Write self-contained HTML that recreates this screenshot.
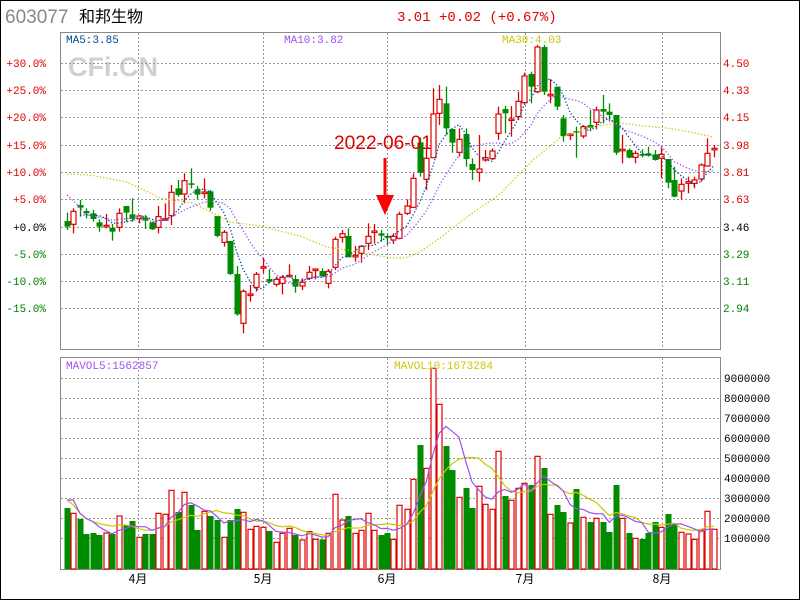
<!DOCTYPE html>
<html><head><meta charset="utf-8">
<style>
html,body{margin:0;padding:0;background:#fff;}
#wrap{position:relative;width:798px;height:598px;border:1px solid #000;overflow:hidden;font-family:"Liberation Sans","Noto Sans CJK SC",sans-serif;}
svg{position:absolute;left:-1px;top:-1px;}
</style></head><body>
<div id="wrap">
<svg id="s" width="800" height="600" xmlns="http://www.w3.org/2000/svg" font-family="Liberation Sans, Noto Sans CJK SC, sans-serif">
<text x="5" y="23" font-size="19" fill="#888">603077</text>
<text x="79" y="22" font-size="16" fill="#000" font-family="Noto Sans CJK SC, sans-serif">和邦生物</text>
<text x="397" y="21" font-size="14" fill="#e00000" font-family="Liberation Mono, monospace">3.01 +0.02 (+0.67%)</text>
<text x="68" y="76" font-size="27" font-weight="bold" fill="#d0d0d0">CFi.CN</text>
<g id="g"></g>
<text x="66" y="43" font-size="11" fill="#004a9a" font-family="Liberation Mono, monospace">MA5:3.85</text>
<text x="284" y="43" font-size="11" fill="#a050f0" font-family="Liberation Mono, monospace">MA10:3.82</text>
<text x="502" y="43" font-size="11" fill="#c8c800" font-family="Liberation Mono, monospace">MA30:4.03</text>
<text x="66" y="369" font-size="11" fill="#a050f0" font-family="Liberation Mono, monospace">MAVOL5:1562857</text>
<text x="394" y="369" font-size="11" fill="#c8c800" font-family="Liberation Mono, monospace">MAVOL10:1673284</text>
<text x="334" y="149" font-size="19" fill="#e00000" textLength="98" lengthAdjust="spacingAndGlyphs">2022-06-01</text>
<rect x="383.5" y="158" width="3" height="42" fill="#f00"/>
<polygon points="376,195 394,195 385,215" fill="#f00"/>
</svg>
</div>
<script>
var g=document.getElementById('g'),h='';
function ln(x1,y1,x2,y2,c,d,w){h+='<line x1="'+x1+'" y1="'+y1+'" x2="'+x2+'" y2="'+y2+'" stroke="'+c+'" stroke-width="'+(w||1)+'"'+(d?' stroke-dasharray="'+d+'"':'')+'/>';}
function tx(x,y,t,c,a,s){h+='<text x="'+x+'" y="'+y+'" font-size="'+(s||11)+'" fill="'+c+'"'+(a?' text-anchor="'+a+'"':'')+' font-family="Liberation Mono, monospace">'+t+'</text>';}
var py=[63,90,117,145,172,199,227,254,281,308];
var lp=['+30.0%','+25.0%','+20.0%','+15.0%','+10.0%','+5.0%','+0.0%','-5.0%','-10.0%','-15.0%'];
var rp=['4.50','4.33','4.15','3.98','3.81','3.63','3.46','3.29','3.11','2.94'];
for(var i=0;i<10;i++){ln(61,py[i]+.5,720,py[i]+.5,'#999','2,2');
 var c=i<6?'#e00000':(i==6?'#000':'#008000');
 tx(46,py[i]+4,lp[i],c,'end');tx(723,py[i]+4,rp[i],c);}
var vx=[138,263,387,525,662];
vx.forEach(function(x){ln(x+.5,33,x+.5,349,'#999','2,2');ln(x+.5,358,x+.5,569,'#999','2,2');});
var mn=['4月','5月','6月','7月','8月'];
for(i=0;i<5;i++)h+='<text x="'+vx[i]+'" y="583" font-size="12" text-anchor="middle" fill="#000" font-family="Noto Sans CJK SC, sans-serif">'+mn[i]+'</text>';
for(i=0;i<9;i++){var y=378+20*i;ln(61,y+.5,720,y+.5,'#999','2,2');tx(724,y+4,(9-i)+'000000','#000');}
h+='<rect x="60.5" y="32.5" width="660" height="317" fill="none" stroke="#888"/>';
h+='<rect x="60.5" y="357.5" width="660" height="212" fill="none" stroke="#888"/>';
var A=[[21,213,230,188,240,0],[40,184,223,175,250,1],[60,165,173,150,200,0],[79,183,190,175,205,0],[98,190,207,180,215,0],[118,217,230,208,245,0],[138,226,229,192,235,1],[157,234,245,222,272,0],[177,190,232,175,245,1],[197,168,188,168,215,0],[216,193,207,145,215,0],[236,198,206,195,220,1],[256,203,212,195,237,0],[276,217,238,215,240,0],[295,200,232,168,250,1],[314,206,210,160,212,1],[334,127,197,105,225,1],[354,115,135,90,140,0],[373,92,132,70,160,1],[392,100,102,55,115,0],[412,118,134,108,148,0],[432,126,128,85,145,1],[451,124,173,120,182,0],[471,198,258,198,262,0],[491,247,277,240,290,1],[511,273,372,273,375,0],[531,372,493,348,497,0],[550,424,520,418,550,1],[570,432,434,405,455,1],[589,373,412,366,425,1],[609,350,352,325,370,1],[628,387,395,358,400,0],[647,388,403,380,410,1],[667,382,400,376,433,1],[686,376,378,343,382,1],[706,387,410,375,428,0],[726,397,408,385,420,1],[746,367,385,348,390,1],[766,357,359,355,388,1],[786,363,378,355,380,0],[805,364,400,357,415,1],[825,268,352,260,360,1],[845,251,262,240,278,1],[864,258,322,235,322,0],[884,316,318,288,335,1],[903,289,310,285,338,1],[923,259,280,220,300,1],[942,243,245,222,280,1],[962,250,257,240,275,0],[981,258,263,250,285,0],[1000,259,270,250,282,1],[1018,193,265,185,268,1]];
var B=[[20,438,460,418,465,1],[40,355,442,340,442,1],[60,247,338,232,350,0],[79,295,358,265,390,1],[99,162,293,85,295,1],[118,118,160,75,195,1],[138,130,205,80,225,0],[157,207,248,207,278,0],[177,238,277,205,290,1],[197,222,297,205,320,0],[216,312,330,295,360,0],[236,327,337,225,365,1],[255,293,300,270,305,1],[275,273,296,265,300,1],[295,162,220,140,240,1],[314,147,160,138,220,0],[334,177,179,138,230,1],[354,124,170,95,180,1],[373,48,128,38,132,1],[392,42,80,35,130,0],[412,-39,95,-45,100,1],[432,-39,95,-45,105,0],[451,103,105,58,130,1],[471,80,140,80,150,0],[490,175,228,165,245,0],[510,222,226,220,240,1],[529,213,215,200,293,0],[549,200,228,195,235,1],[569,195,203,150,210,0],[589,150,187,140,208,1],[608,147,155,105,190,0],[628,155,165,130,185,0],[648,165,278,165,285,0],[667,268,270,225,310,1],[687,270,293,265,295,0],[706,280,292,272,310,1],[726,282,287,268,292,0],[745,280,287,260,290,0],[765,283,300,270,302,0],[784,283,295,260,355,1],[803,297,368,297,385,0],[823,360,410,320,412,0],[843,373,393,355,418,1],[863,365,370,350,400,1],[882,360,370,350,385,1],[902,315,357,310,365,1],[921,280,318,235,320,1],[941,265,267,255,292,1]];
var C=[];
A.forEach(function(a){C.push([60+a[0]/3,150+a[1]/3,150+a[2]/3,150+a[3]/3,150+a[4]/3,a[5]]);});
B.forEach(function(a){C.push([400+a[0]/3,60+a[1]/3,60+a[2]/3,60+a[3]/3,60+a[4]/3,a[5]]);});
var V=[474,490,507,552,549,555,549,552,498,525,513,562,552,552,490,493,421,486,427,465,540,484,498,510,562,510,477,487,538,529,532,543,577,550,535,555,570,545,568,568,550,433,510,498,550,541,490,541,555,549,568].map(function(v){return 350+v/3;});
V.push(350+466/3);
[478,388,285,355,55,163,288,360,442,414,474,409,463,478,304,438,451,415,400,405,319,354,493,465,486,519,417,502,516,505,516,546,405,505,549,565,567,549,516,532,492,522,547,552,568,540,484,538].forEach(function(v){V.push(350+v/3);});
var R='#e00000',G='#008c00';
C.forEach(function(c,i){
 var x=Math.round(c[0])+.5,col=c[5]?R:G;
 ln(x,c[3],x,c[4],col,0,1.3);
 var t=c[1],b=Math.max(c[2],c[1]+1.5);
 if(c[5]) h+='<rect x="'+(x-2.5)+'" y="'+t+'" width="5" height="'+(b-t)+'" fill="#fff" stroke="'+R+'" stroke-width="1.2"/>';
 else h+='<rect x="'+(x-3)+'" y="'+t+'" width="6" height="'+(b-t)+'" fill="'+G+'"/>';
 var vy=V[i];
 if(c[5]) h+='<rect x="'+(x-2.5)+'" y="'+vy+'" width="5" height="'+(569-vy)+'" fill="#fff" stroke="'+R+'" stroke-width="1.2"/>';
 else h+='<rect x="'+(x-3)+'" y="'+vy+'" width="6" height="'+(569-vy)+'" fill="'+G+'"/>';
});
function ma(arr,n){var o=[];for(var i=0;i<arr.length;i++){var s=0,k=0;for(var j=Math.max(0,i-n+1);j<=i;j++){s+=arr[j];k++;}o.push(s/k);}return o;}
var cl=C.map(function(c){return c[5]?c[1]:c[2];});
function pl(ys,col,d,w,st){var p=[];for(var i=st||0;i<ys.length;i++)p.push(C[i][0].toFixed(1)+','+ys[i].toFixed(1));h+='<polyline points="'+p.join(' ')+'" fill="none" stroke="'+col+'" stroke-width="'+(w||1.3)+'"'+(d?' stroke-dasharray="'+d+'"':'')+'/>';}
var m10=ma(cl,10);for(i=0;i<3;i++)m10[i]=195+i*6;
pl(m10,'#a050f0','1.3,2');
pl(ma(cl,5),'#004a9a','1.3,2',1.3,2);
h+='<polyline points="67,174 90,175 127,182 160,198 193,203 230,222 260,226 300,236 327,247 360,252 380,256 393,258 405,258 420,252 440,238 467,217 500,194 533,160 560,138 590,127 620,123 645,126 667,128 690,132 713,137" fill="none" stroke="#c8c800" stroke-width="1.3" stroke-dasharray="1.3,2"/>';
var vv=V.map(function(v){return 569-v;});
var mv5=ma(vv,5).map(function(v){return 569-v;}),mv10=ma(vv,10).map(function(v){return 569-v;});
mv5[0]=mv5[1]=500;mv10[0]=500;mv10[1]=505;
pl(mv10,'#c8c800',0,1.2);
pl(mv5,'#a050f0',0,1.2);
g.innerHTML=h;
</script>
</body></html>
